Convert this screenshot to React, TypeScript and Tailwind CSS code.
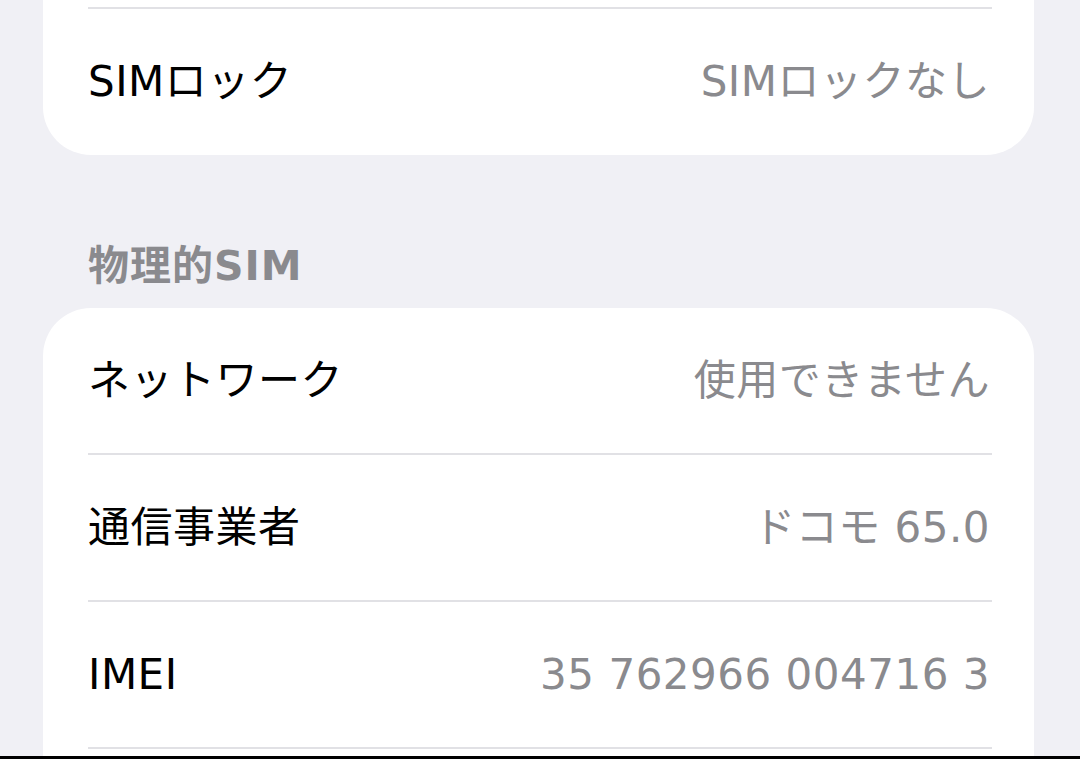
const font = '[font-family:"DejaVu_Sans","Noto_Sans_CJK_JP",sans-serif]';

type Row = { label: string; value: string };

const physicalSim: Row[] = [
  { label: 'ネットワーク', value: '使用できません' },
  { label: '通信事業者', value: 'ドコモ 65.0' },
  { label: 'IMEI', value: '35 762966 004716 3' },
];

function Separator() {
  return <div className="ml-[45px] mr-[42px] h-[2px] bg-[#e1e1e5]" />;
}

function InfoRow({ label, value, height = 'h-[145px]' }: Row & { height?: string }) {
  return (
    <div className={`flex items-center justify-between pl-[45px] pr-[44px] ${height}`}>
      <span className="text-[42px] leading-[48px] tracking-[0.5px] text-black">{label}</span>
      <span className="text-[42px] leading-[48px] tracking-[0.5px] text-[#8a8a8e]">{value}</span>
    </div>
  );
}

export default function App() {
  return (
    <div className={`flex h-[759px] w-[1080px] flex-col overflow-hidden bg-[#f0f0f5] ${font}`}>
      <div className="flex-1 overflow-hidden pl-[43px] pr-[46px]">
        {/* SIMロック card (continues above the viewport) */}
        <div className="rounded-b-[48px] bg-white pt-[7px]">
          <Separator />
          <InfoRow label="SIMロック" value="SIMロックなし" height="h-[146px]" />
        </div>

        <div className="pl-[45px] pt-[87px] pb-[18px]">
          <h2 className="text-[41px] font-bold leading-[48px] tracking-[1px] text-[#8a8a8e]">物理的SIM</h2>
        </div>

        <div className="rounded-t-[48px] bg-white">
          {physicalSim.map((row) => (
            <div key={row.label}>
              <InfoRow label={row.label} value={row.value} />
              <Separator />
            </div>
          ))}
          <div className="h-[40px]" />
        </div>
      </div>
      <div className="h-[3px] bg-black" />
    </div>
  );
}
